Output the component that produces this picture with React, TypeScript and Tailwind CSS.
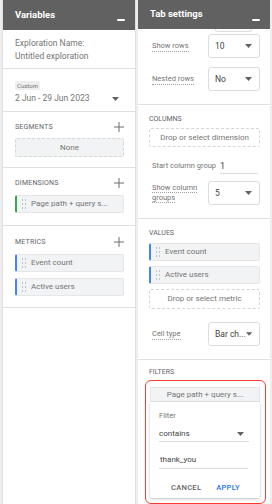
import React from 'react';

const Minus = () => <div className="w-[8px] h-[2px] bg-white rounded-[1px] mt-[10px]" />;

const Plus = () => (
  <svg width="10" height="10" viewBox="0 0 10 10" className="text-[#6f6f6f]">
    <path d="M5 0v10M0 5h10" stroke="currentColor" strokeWidth="1" />
  </svg>
);

const Caret = () => (
  <svg width="7" height="4" viewBox="0 0 7 4">
    <path d="M0 0h7L3.5 4z" fill="#5f6368" />
  </svg>
);

const Handle = () => (
  <div className="grid grid-cols-2 gap-x-[2px] gap-y-[2px] ml-[5px] mr-[5px]">
    {[0, 1, 2, 3, 4, 5].map((i) => (
      <div key={i} className="w-[1px] h-[2px] bg-[#c4c4c4]" />
    ))}
  </div>
);

const Chip = ({ label, color }: { label: string; color: string }) => (
  <div
    className="h-[18px] flex items-center bg-[#f1f3f4] border border-[#e6e6e6] border-l-2 rounded-[2px] text-[8px] text-[#757575]"
    style={{ borderLeftColor: color }}
  >
    <Handle />
    <span>{label}</span>
  </div>
);

const Section = ({ title, children }: { title: string; children?: React.ReactNode }) => (
  <div className="flex items-center justify-between h-[14px]">
    <span className="text-[7px] tracking-[0.2px] text-[#5f6368]">{title}</span>
    {children}
  </div>
);

const Select = ({ value }: { value: string }) => (
  <div className="w-[52px] h-[24px] border border-[#dadce0] rounded-[3px] flex items-center justify-between pl-[6px] pr-[7px] text-[8.5px] text-[#444] whitespace-nowrap">
    <span>{value}</span>
    <Caret />
  </div>
);

const Dotted = ({ children }: { children: React.ReactNode }) => (
  <span className="border-b border-dotted border-[#9e9e9e] leading-[10px] text-[7.5px] text-[#757575]">{children}</span>
);

const Header = ({ title }: { title: string }) => (
  <div className="h-[30px] bg-[#616161] flex items-center justify-between pl-[12px] pr-[10px]">
    <span className="text-[9.5px] font-bold text-white">{title}</span>
    <Minus />
  </div>
);

export default function App() {
  return (
    <div
      className="w-[272px] h-[504px] bg-[#eeeeee] flex gap-[2px] px-[2px] overflow-hidden"
      style={{ fontFamily: 'Roboto, "Liberation Sans", sans-serif' }}
    >
      {/* Variables */}
      <div className="w-[134px] bg-white flex flex-col border-l border-[#e0e0e0] border-r">
        <Header title="Variables" />
        <div className="pl-[12px] pr-[10px] pt-[7px] pb-[5px] border-b border-[#e0e0e0] text-[8.5px] leading-[13px] text-[#757575]">
          <div>Exploration Name:</div>
          <div>Untitled exploration</div>
        </div>
        <div className="pl-[12px] pr-[10px] pt-[12px] pb-[6px] border-b border-[#e0e0e0] flex flex-col">
          <div className="self-start bg-[#eeeeee] rounded-[2px] px-[2px] text-[6px] leading-[9px] text-[#757575]">Custom</div>
          <div className="mt-[2px] flex items-center justify-between leading-[13px] text-[8.5px] text-[#757575]">
            <span>2 Jun - 29 Jun 2023</span>
            <span className="mr-[6px]"><Caret /></span>
          </div>
        </div>
        <div className="pl-[12px] pr-[11px] pt-[8px] pb-[10px] border-b border-[#e0e0e0]">
          <Section title="SEGMENTS"><Plus /></Section>
          <div className="mt-[4px] h-[19px] flex items-center justify-center bg-[#f1f3f4] border border-dashed border-[#d6d6d6] rounded-[2px] text-[8px] text-[#757575]">None</div>
        </div>
        <div className="pl-[12px] pr-[11px] pt-[8px] pb-[12px] border-b border-[#e0e0e0]">
          <Section title="DIMENSIONS"><Plus /></Section>
          <div className="mt-[5px]"><Chip label="Page path + query s..." color="#34a853" /></div>
        </div>
        <div className="pl-[12px] pr-[11px] pt-[9px] pb-[11px] border-b border-[#e0e0e0] flex flex-col">
          <Section title="METRICS"><Plus /></Section>
          <div className="mt-[5px] flex flex-col gap-[6px]">
            <Chip label="Event count" color="#4285f4" />
            <Chip label="Active users" color="#4285f4" />
          </div>
        </div>
      </div>

      {/* Tab settings */}
      <div className="w-[132px] bg-white flex flex-col">
        <Header title="Tab settings" />
        <div className="pl-[11px] pr-[10px] pb-[13px] border-b border-[#e0e0e0]">
          <div className="ml-[66px] mr-[8px] h-[3px] border border-t-0 border-[#dadce0] rounded-b-[3px]" />
          <div className="mt-[2px] flex items-center justify-between pl-[3px]">
            <Dotted>Show rows</Dotted>
            <Select value="10" />
          </div>
          <div className="mt-[9px] flex items-center justify-between pl-[3px]">
            <Dotted>Nested rows</Dotted>
            <Select value="No" />
          </div>
        </div>
        <div className="pl-[11px] pr-[10px] pt-[8px] pb-[13px] border-b border-[#e0e0e0]">
          <div className="h-[12px] flex items-center text-[7px] text-[#5f6368]">COLUMNS</div>
          <div className="mt-[3px] h-[19px] flex items-center justify-center border border-dashed border-[#d6d6d6] rounded-[2px] text-[8px] text-[#757575]">Drop or select dimension</div>
          <div className="mt-[11px] h-[16px] flex items-center pl-[3px] text-[7.5px] text-[#757575]">
            <span>Start column group</span>
            <span className="ml-[4px] flex-1 mr-[2px] border-b border-[#dadce0] text-[9px] text-[#444] leading-[14px]">1</span>
          </div>
          <div className="mt-[7px] flex items-center justify-between pl-[3px]">
            <div className="flex flex-col text-[7.5px] leading-[9px] text-[#757575]">
              <span className="border-b border-dotted border-[#9e9e9e] self-start">Show column</span>
              <span className="border-b border-dotted border-[#9e9e9e] self-start">groups</span>
            </div>
            <Select value="5" />
          </div>
        </div>
        <div className="pl-[11px] pr-[10px] pt-[8px] pb-[13px] border-b border-[#e0e0e0]">
          <div className="h-[12px] flex items-center text-[7px] text-[#5f6368]">VALUES</div>
          <div className="mt-[4px] flex flex-col gap-[5px]">
            <Chip label="Event count" color="#4285f4" />
            <Chip label="Active users" color="#4285f4" />
            <div className="h-[20px] flex items-center justify-center border border-dashed border-[#d6d6d6] rounded-[2px] text-[8px] text-[#757575]">Drop or select metric</div>
          </div>
          <div className="mt-[13px] flex items-center justify-between pl-[3px]">
            <Dotted>Cell type</Dotted>
            <Select value="Bar ch..." />
          </div>
        </div>
        <div className="pl-[11px] pr-[4px] pt-[6px] flex flex-col">
          <div className="h-[12px] flex items-center text-[7px] text-[#5f6368]">FILTERS</div>
          <div className="-ml-[4px] mt-[2px] h-[124px] border-[1.5px] border-[#ff3b30] rounded-[6px] pl-[4px] pr-[5px] pt-[6px]">
            <div className="h-[15px] flex items-center justify-center bg-[#f1f3f4] border border-[#e6e6e6] text-[8px] text-[#757575]">Page path + query s...</div>
            <div className="h-[96px] bg-white shadow-[0_1px_3px_rgba(0,0,0,0.25)] rounded-b-[2px] pl-[9px] pr-[11px] pt-[8px]">
              <div className="text-[7.5px] leading-[12px] text-[#757575]">Filter</div>
              <div className="mt-[4px] h-[16px] flex items-center justify-between border-b border-[#dadce0] text-[8px] text-[#444] pr-[5px]">
                <span>contains</span>
                <Caret />
              </div>
              <div className="mt-[10px] h-[17px] flex items-center border-b border-[#dadce0] text-[8px] text-[#444] mr-[1px] pl-[1px]">thank_you</div>
              <div className="mt-[13px] flex justify-end gap-[15px] pr-[9px] text-[7.5px] font-medium tracking-[0.3px]">
                <span className="text-[#5f6368]">CANCEL</span>
                <span className="text-[#1a73e8]">APPLY</span>
              </div>
            </div>
          </div>
        </div>
      </div>
    </div>
  );
}
